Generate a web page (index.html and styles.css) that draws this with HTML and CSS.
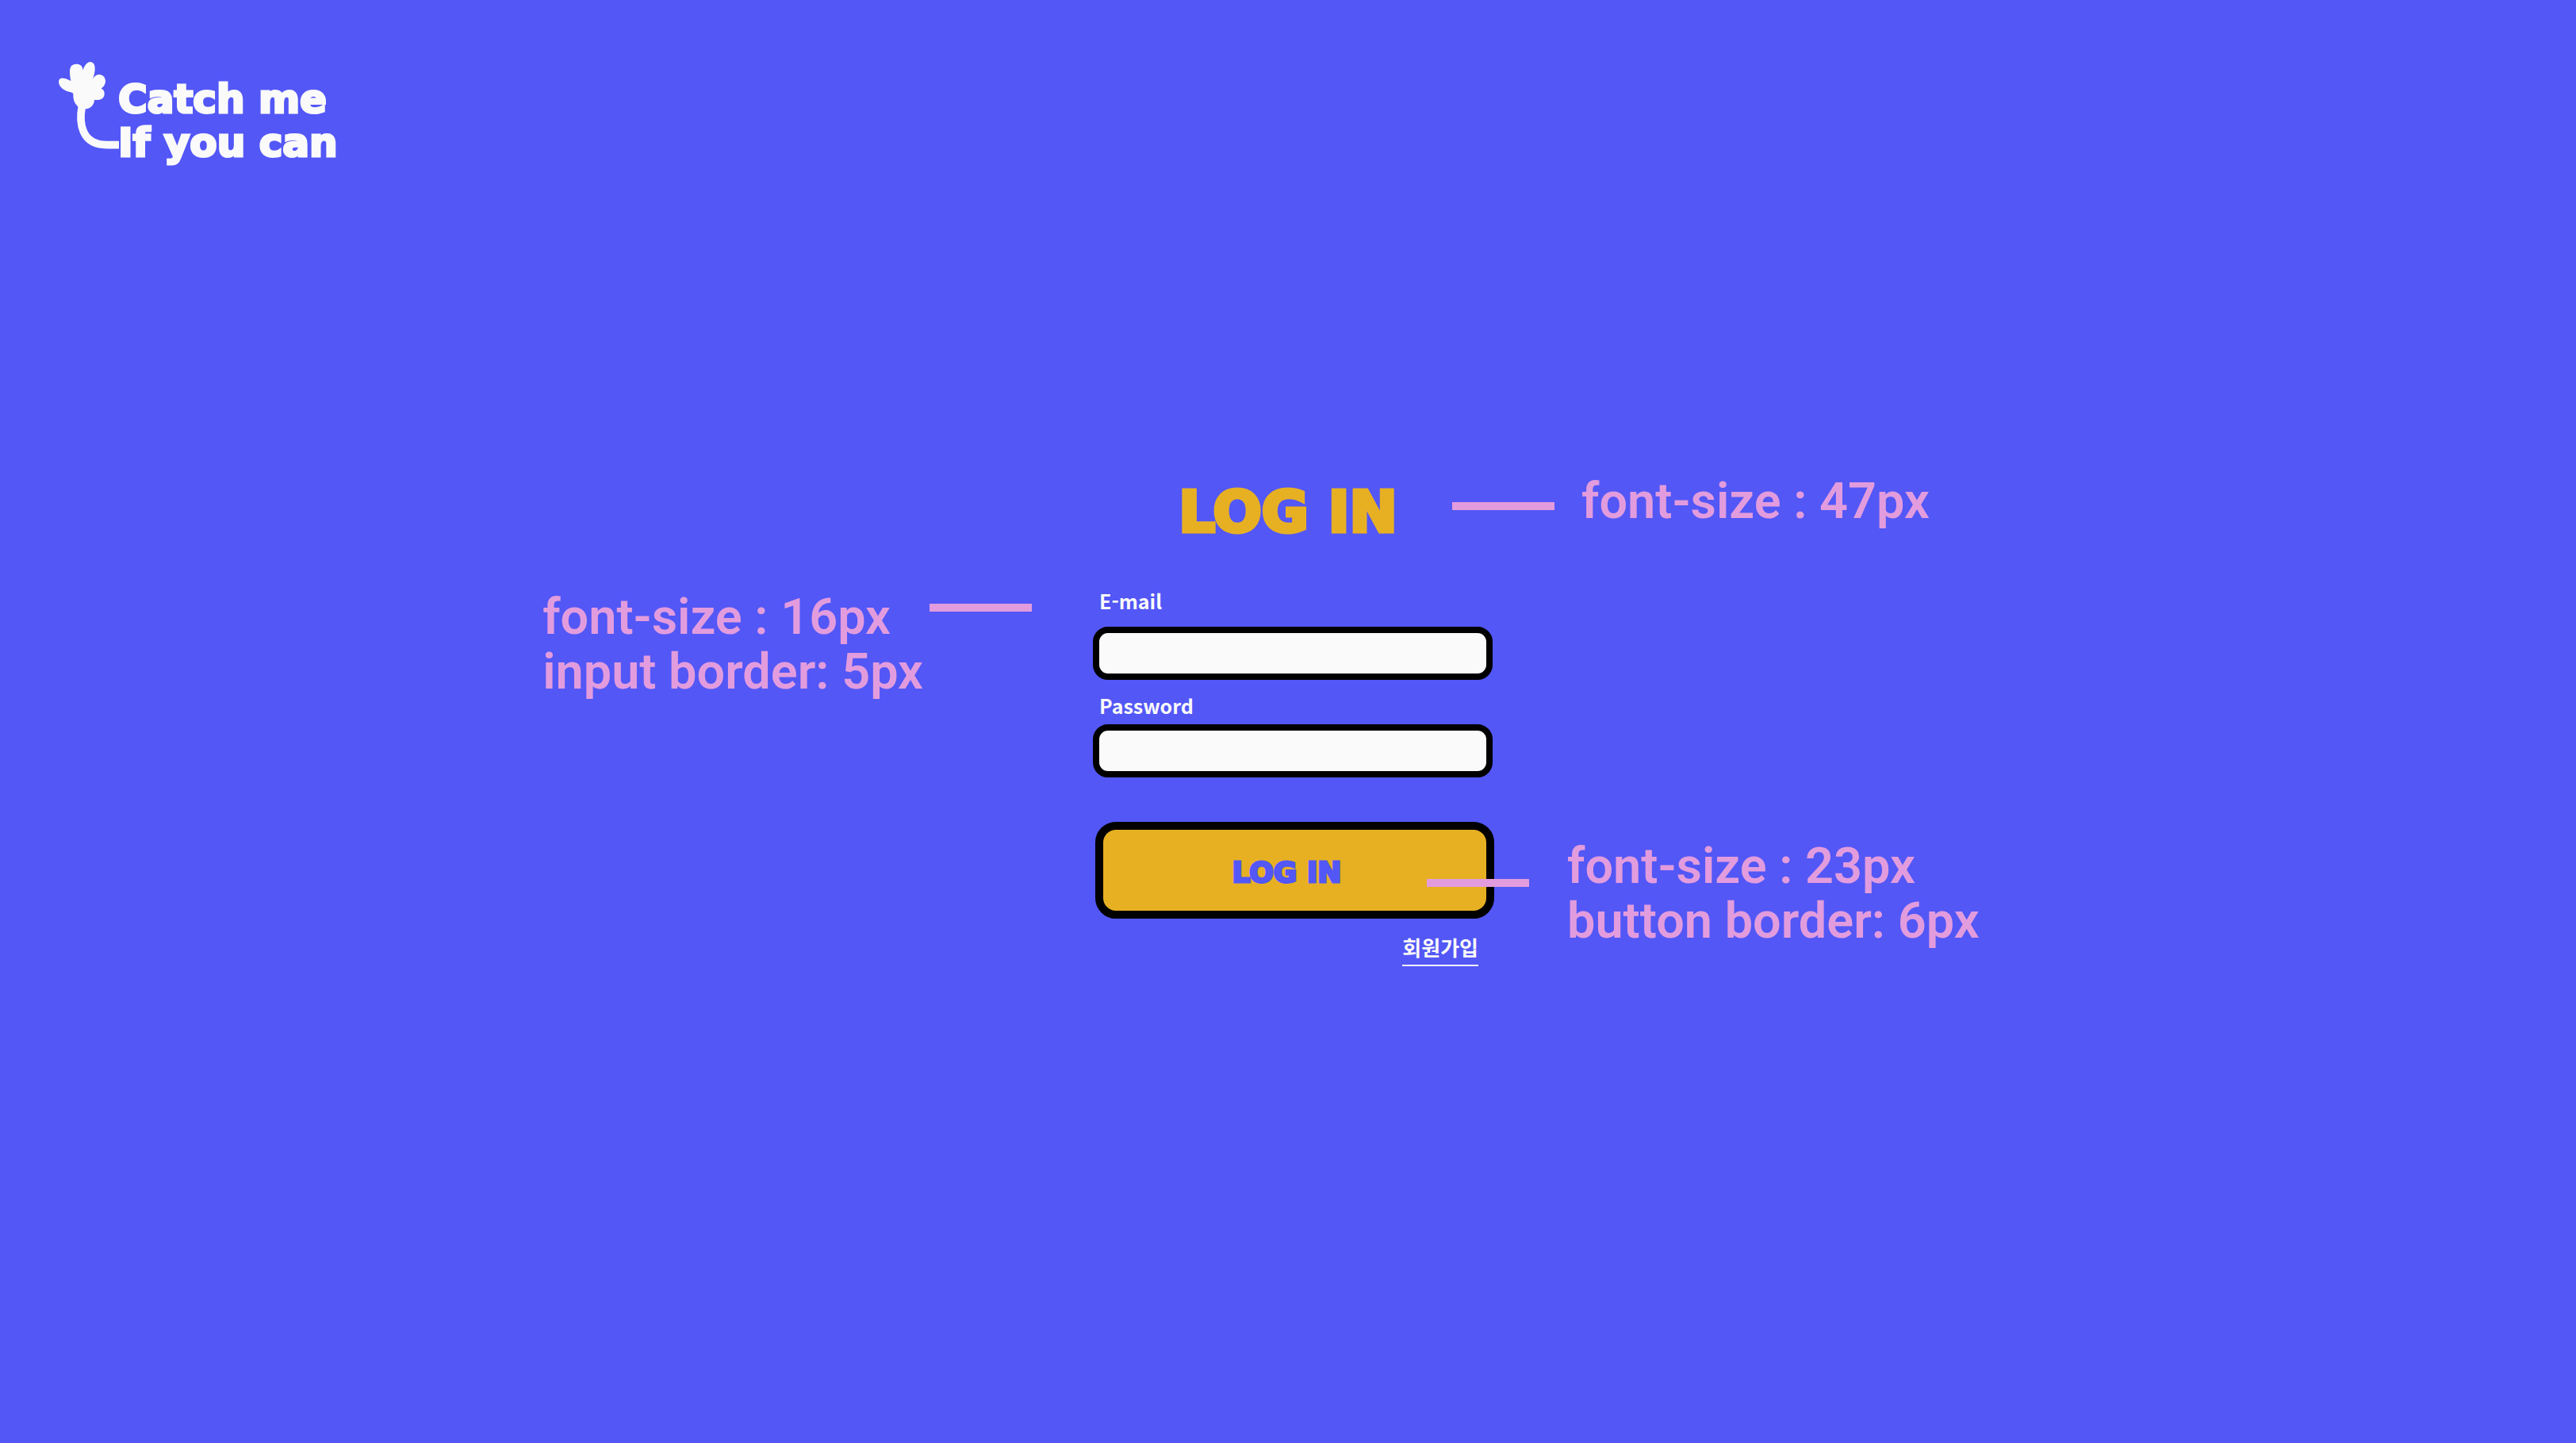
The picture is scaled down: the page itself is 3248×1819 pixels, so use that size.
FILE: index.html
```html
<!DOCTYPE html>
<html lang="ko">
<head>
  <meta charset="utf-8">
  <meta name="viewport" content="width=device-width, initial-scale=1">
  <title>Catch me If you can</title>
  <link rel="stylesheet" href="styles.css">
</head>
<body>
  <header class="header">
    <a class="logo" href="#">
      <svg class="logo-flower" viewBox="72 54 225 330" aria-hidden="true">
        <path class="petals" d="M148 226C138 216 126 205 127 176C127 172 124 171 118 169C92 164 72 148 72 129C73 112 90 112 118 126C114 106 112 84 117 74C123 61 143 60 154 66C161 71 163 78 164 86C168 68 181 54 192 54C209 55 212 76 207 98C205 108 201 116 198 122C207 106 218 101 228 102C243 104 250 117 249 130C247 142 240 151 232 155C242 157 246 167 245 177C243 193 229 201 207 197C207 214 194 230 176 232Z"/>
        <path class="stem" d="M160 222C148 286 158 368 254 368H300"/>
      </svg>
      <span class="logo-text">Catch me<br>If you can</span>
    </a>
  </header>

  <main class="main">
    <form class="login">
      <div class="row row-title">
        <h1 class="title">LOG IN</h1>
        <p class="note note-title"><span class="dash"></span><span>font-size : 47px</span></p>
      </div>

      <div class="row row-email">
        <label class="label" for="email">E-mail</label>
        <input class="input" id="email" type="email">
        <p class="note note-field"><span>font-size : 16px<br>input border: 5px</span><span class="dash"></span></p>
      </div>

      <div class="row row-password">
        <label class="label" for="password">Password</label>
        <input class="input" id="password" type="password">
      </div>

      <div class="row row-submit">
        <button class="submit" type="submit">LOG IN</button>
        <p class="note note-button"><span class="dash"></span><span>font-size : 23px<br>button border: 6px</span></p>
      </div>

      <a class="signup" href="#">회원가입</a>
    </form>
  </main>
</body>
</html>
```
FILE: styles.css
```css
:root {
  --blue: #5357f6;
  --yellow: #e7b023;
  --pink: #e29cdd;
  --white: #fafafa;
  --display: "DejaVu Sans", sans-serif;
  --body: "Noto Sans CJK KR", "Noto Sans", sans-serif;
}

* {
  box-sizing: border-box;
}

body {
  margin: 0;
  min-height: 100vh;
  background: var(--blue);
  color: var(--white);
  font-family: var(--body);
}

.header {
  padding: 78px 74px 0;
}

.logo {
  display: inline-flex;
  align-items: flex-start;
  color: var(--white);
  text-decoration: none;
}

.logo-flower {
  width: 75px;
  height: 110px;
  overflow: visible;
}

.petals {
  fill: var(--white);
}

.stem {
  fill: none;
  stroke: var(--white);
  stroke-width: 29;
}

.logo-text {
  padding-top: 20px;
  font: 700 50px/55px var(--display);
  white-space: nowrap;
  -webkit-text-stroke: 3px var(--white);
}

.main {
  display: flex;
  justify-content: center;
  padding: 397px 0 80px 14px;
}

.login {
  display: flex;
  flex-direction: column;
  width: 506px;
}

.row {
  position: relative;
  display: flex;
  flex-direction: column;
}

.title {
  margin: 0;
  padding-right: 14px;
  color: var(--yellow);
  font: 700 72px/80px var(--display);
  text-align: center;
  -webkit-text-stroke: 5px var(--yellow);
}

.row-email {
  margin-top: 52px;
}

.row-password {
  margin-top: 12px;
}

.row-submit {
  margin-top: 56px;
}

.label {
  padding: 0 0 4px 8px;
  font-size: 25px;
  font-weight: 700;
  line-height: 40px;
}

.row-email .label {
  padding-bottom: 13px;
}

.input {
  width: 504px;
  height: 67px;
  padding: 0 16px;
  border: 8px solid #000;
  border-radius: 19px;
  background: var(--white);
  color: #000;
  font: 500 25px/40px var(--body);
}

.submit {
  align-self: flex-end;
  width: 503px;
  height: 122px;
  padding: 6px 20px 0 0;
  border: 10px solid #000;
  border-radius: 26px;
  background: var(--yellow);
  color: var(--blue);
  font: 700 36px/44px var(--display);
  -webkit-text-stroke: 3px var(--blue);
}

.signup {
  align-self: flex-end;
  margin: 16px 20px 0 0;
  padding-bottom: 2px;
  border-bottom: 2px solid var(--white);
  color: var(--white);
  font-size: 26px;
  font-weight: 700;
  line-height: 40px;
  text-decoration: none;
}

/* Spec notes lie beside and over the form controls */
.note {
  position: absolute;
  display: flex;
  margin: 0;
  color: var(--pink);
  font: 600 63px/69px Roboto, "Noto Sans", sans-serif;
  white-space: nowrap;
}

.dash {
  flex: none;
  width: 129px;
  height: 10px;
  background: var(--pink);
}

.note-title {
  top: -8px;
  left: 453px;
  gap: 34px;
}

.note-title .dash {
  margin-top: 36px;
}

.note-field {
  top: 6px;
  right: 583px;
  gap: 8px;
}

.note-field .dash {
  margin-top: 18px;
}

.note-button {
  top: 21px;
  left: 421px;
  gap: 48px;
}

.note-button .dash {
  margin-top: 51px;
}
```
